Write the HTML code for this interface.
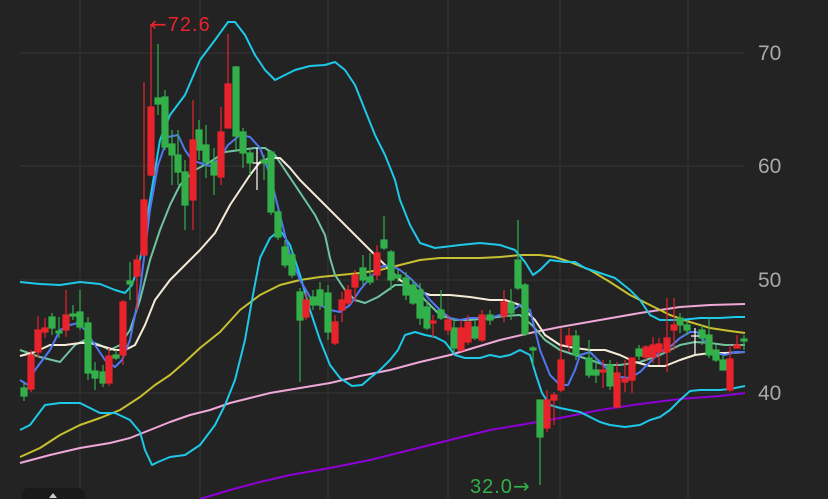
<!DOCTYPE html>
<html><head><meta charset="utf-8"><style>
html,body{margin:0;padding:0;background:#232323;overflow:hidden}
svg{display:block}
text{font-family:"Liberation Sans",sans-serif}
</style></head><body>
<svg width="828" height="499" viewBox="0 0 828 499" xmlns="http://www.w3.org/2000/svg">
<rect width="828" height="499" fill="#232323"/>
<g stroke="#343434" stroke-width="1">
<line x1="20" y1="53" x2="745" y2="53"/><line x1="20" y1="166" x2="745" y2="166"/>
<line x1="20" y1="280" x2="745" y2="280"/><line x1="20" y1="393" x2="745" y2="393"/>
<line x1="80" y1="0" x2="80" y2="499"/><line x1="200" y1="0" x2="200" y2="499"/>
<line x1="328" y1="0" x2="328" y2="499"/><line x1="448" y1="0" x2="448" y2="499"/>
<line x1="560" y1="0" x2="560" y2="499"/><line x1="688" y1="0" x2="688" y2="499"/>
</g>
<g fill="#a9a9a9" font-size="21">
<text x="758" y="60">70</text><text x="758" y="173">60</text><text x="758" y="287">50</text><text x="758" y="400">40</text><text x="758" y="514">30</text>
</g>
<g fill="none" stroke-width="2" stroke-linejoin="round">
<polyline stroke="#8e00d6" points="200,499 230,490 260,482 290,475 330,468 370,460 410,450 450,440 490,430 520,425 560,418 600,410 640,404 680,399 720,396 745,393"/>
<polyline stroke="#f0a8d8" points="20,463 50,455 80,448 110,443 130,438 150,430 170,422 190,415 210,410 230,403 250,398 270,393 300,388 330,383 360,376 390,370 420,362 450,355 480,346 500,340 530,333 560,327 600,320 640,313 680,307 710,305 745,304"/>
<polyline stroke="#c8c030" points="20,457 40,448 60,435 80,425 100,418 120,410 140,397 155,385 170,375 185,362 200,348 220,332 240,310 260,295 280,285 300,280 320,277 340,275 360,273 380,270 400,265 420,260 440,258 460,258 480,258 500,257 520,255 540,255 555,257 570,262 590,270 610,282 630,295 650,305 670,315 690,322 710,328 730,331 745,333"/>
<polyline stroke="#1ec8e8" points="20,282 40,284 60,285 80,282 100,284 115,290 125,293 132,285 140,260 150,200 160,140 170,115 185,95 200,60 215,40 228,22 235,22 245,35 255,55 265,70 275,80 285,75 295,70 310,66 325,65 335,62 345,70 355,85 365,110 375,135 385,155 395,180 400,200 410,225 420,243 435,248 460,245 480,243 500,245 515,250 525,262 533,275 540,270 550,260 565,262 575,262 585,268 600,273 615,278 630,290 640,300 650,315 660,320 680,320 700,318 720,318 735,317 745,317"/>
<polyline stroke="#1ec8e8" points="20,430 30,425 45,405 60,403 80,403 90,408 100,413 115,413 130,420 140,432 145,450 152,465 158,462 170,457 185,455 200,445 215,425 225,405 235,380 245,340 252,300 260,258 270,238 280,230 290,245 300,275 310,310 320,340 330,365 340,378 352,386 362,385 370,378 380,370 390,360 398,350 405,335 415,332 425,335 435,337 445,342 455,355 465,358 480,358 490,355 500,357 510,355 520,350 530,355 536,375 542,393 550,405 560,408 570,410 580,412 590,417 600,422 610,425 625,427 640,425 650,420 660,417 670,410 680,400 690,391 700,390 720,390 730,389 745,386"/>
<polyline stroke="#6fc3a0" points="20,350 40,357 60,362 75,345 85,340 100,345 110,350 120,345 130,330 140,300 150,260 160,230 170,205 180,185 195,170 210,162 225,152 240,150 255,148 265,148 275,155 285,170 295,185 305,200 315,215 325,235 330,258 335,275 345,290 355,300 365,303 378,297 388,290 395,285 405,285 415,288 425,300 440,315 455,320 470,320 490,318 505,316 520,315 532,325 545,340 560,350 575,355 590,360 605,365 620,365 640,362 660,355 680,345 695,342 710,343 725,345 745,345"/>
<polyline stroke="#f5ecd8" points="20,356 35,352 50,345 65,345 80,343 90,343 105,347 115,350 125,350 135,345 145,325 155,300 170,280 185,265 200,250 215,233 230,205 240,190 250,175 260,162 270,158 280,158 290,168 300,180 310,190 320,200 335,215 345,225 355,235 365,245 375,255 385,265 400,280 415,290 430,295 450,295 470,297 490,300 505,300 520,305 535,320 545,335 560,345 575,348 590,350 605,350 620,355 635,362 650,366 665,366 680,360 695,355 710,353 725,353 745,352"/>
<polyline stroke="#4f78f0" points="20,380 28,385 35,370 50,350 60,330 70,325 78,323 85,330 95,345 105,360 115,367 122,360 130,340 140,290 150,210 158,165 168,137 178,135 185,150 192,160 200,163 210,166 220,158 228,145 240,135 250,137 260,148 270,175 280,215 290,255 300,280 310,297 320,305 330,310 340,312 350,305 360,290 370,278 380,267 390,265 400,270 410,278 420,288 430,300 440,310 450,318 460,320 470,318 490,318 500,315 510,312 520,305 530,310 535,330 540,350 550,375 560,385 568,385 575,370 580,355 590,352 600,362 610,372 620,377 630,378 640,372 650,362 660,352 670,347 680,338 690,332 697,332 705,342 715,353 725,355 735,352 745,352"/>
</g>
<g stroke-width="1.2">
<g stroke="#33b04a" fill="#33b04a">
<line x1="24" y1="383" x2="24" y2="401"/><rect x="21" y="388" width="6" height="8"/>
<line x1="52" y1="313" x2="52" y2="335"/><rect x="49" y="317" width="6" height="11"/>
<line x1="59" y1="317" x2="59" y2="338"/><rect x="56" y="331" width="6" height="2"/>
<line x1="73" y1="305" x2="73" y2="320"/><rect x="70" y="314" width="6" height="2"/>
<line x1="80" y1="290" x2="80" y2="330"/><rect x="77" y="312" width="6" height="15"/>
<line x1="88" y1="317" x2="88" y2="380"/><rect x="85" y="323" width="6" height="50"/>
<line x1="95" y1="362" x2="95" y2="390"/><rect x="92" y="371" width="6" height="7"/>
<line x1="103" y1="365" x2="103" y2="387"/><rect x="100" y="372" width="6" height="11"/>
<line x1="116" y1="350" x2="116" y2="360"/><rect x="113" y="355" width="6" height="3"/>
<line x1="130" y1="262" x2="130" y2="300"/><rect x="127" y="281" width="6" height="3"/>
<line x1="158" y1="44" x2="158" y2="115"/><rect x="155" y="98" width="6" height="6"/>
<line x1="165" y1="90" x2="165" y2="150"/><rect x="162" y="97" width="6" height="50"/>
<line x1="172" y1="130" x2="172" y2="185"/><rect x="169" y="144" width="6" height="11"/>
<line x1="178" y1="130" x2="178" y2="185"/><rect x="175" y="155" width="6" height="17"/>
<line x1="185" y1="160" x2="185" y2="230"/><rect x="182" y="172" width="6" height="33"/>
<line x1="199" y1="120" x2="199" y2="160"/><rect x="196" y="130" width="6" height="20"/>
<line x1="206" y1="125" x2="206" y2="178"/><rect x="203" y="145" width="6" height="17"/>
<line x1="214" y1="148" x2="214" y2="195"/><rect x="211" y="162" width="6" height="13"/>
<line x1="236" y1="66" x2="236" y2="150"/><rect x="233" y="67" width="6" height="69"/>
<line x1="243" y1="128" x2="243" y2="168"/><rect x="240" y="132" width="6" height="21"/>
<line x1="250" y1="150" x2="250" y2="175"/><rect x="247" y="153" width="6" height="10"/>
<line x1="264" y1="155" x2="264" y2="180"/><rect x="261" y="160" width="6" height="3"/>
<line x1="271" y1="150" x2="271" y2="215"/><rect x="268" y="152" width="6" height="60"/>
<line x1="278" y1="210" x2="278" y2="240"/><rect x="275" y="212" width="6" height="25"/>
<line x1="285" y1="240" x2="285" y2="268"/><rect x="282" y="247" width="6" height="18"/>
<line x1="292" y1="250" x2="292" y2="278"/><rect x="289" y="255" width="6" height="20"/>
<line x1="300" y1="288" x2="300" y2="382"/><rect x="297" y="292" width="6" height="28"/>
<line x1="313" y1="290" x2="313" y2="310"/><rect x="310" y="297" width="6" height="8"/>
<line x1="320" y1="282" x2="320" y2="310"/><rect x="317" y="290" width="6" height="15"/>
<line x1="328" y1="285" x2="328" y2="340"/><rect x="325" y="293" width="6" height="39"/>
<line x1="363" y1="255" x2="363" y2="285"/><rect x="360" y="268" width="6" height="12"/>
<line x1="370" y1="253" x2="370" y2="285"/><rect x="367" y="277" width="6" height="5"/>
<line x1="384" y1="216" x2="384" y2="250"/><rect x="381" y="240" width="6" height="8"/>
<line x1="391" y1="250" x2="391" y2="290"/><rect x="388" y="252" width="6" height="28"/>
<line x1="398" y1="270" x2="398" y2="282"/><rect x="395" y="275" width="6" height="3"/>
<line x1="406" y1="272" x2="406" y2="300"/><rect x="403" y="278" width="6" height="17"/>
<line x1="413" y1="280" x2="413" y2="305"/><rect x="410" y="285" width="6" height="18"/>
<line x1="420" y1="283" x2="420" y2="325"/><rect x="417" y="290" width="6" height="28"/>
<line x1="427" y1="300" x2="427" y2="330"/><rect x="424" y="307" width="6" height="21"/>
<line x1="441" y1="290" x2="441" y2="320"/><rect x="438" y="310" width="6" height="8"/>
<line x1="454" y1="318" x2="454" y2="352"/><rect x="451" y="328" width="6" height="20"/>
<line x1="475" y1="320" x2="475" y2="340"/><rect x="472" y="327" width="6" height="11"/>
<line x1="490" y1="310" x2="490" y2="325"/><rect x="487" y="315" width="6" height="5"/>
<line x1="511" y1="289" x2="511" y2="320"/><rect x="508" y="303" width="6" height="10"/>
<line x1="518" y1="220" x2="518" y2="290"/><rect x="515" y="260" width="6" height="28"/>
<line x1="525" y1="283" x2="525" y2="336"/><rect x="522" y="285" width="6" height="49"/>
<line x1="533" y1="346" x2="533" y2="366"/><rect x="530" y="348" width="6" height="2"/>
<line x1="540" y1="400" x2="540" y2="485"/><rect x="537" y="400" width="6" height="37"/>
<line x1="576" y1="330" x2="576" y2="360"/><rect x="573" y="336" width="6" height="19"/>
<line x1="589" y1="340" x2="589" y2="378"/><rect x="586" y="358" width="6" height="17"/>
<line x1="596" y1="358" x2="596" y2="383"/><rect x="593" y="370" width="6" height="5"/>
<line x1="610" y1="360" x2="610" y2="390"/><rect x="607" y="365" width="6" height="21"/>
<line x1="639" y1="345" x2="639" y2="360"/><rect x="636" y="349" width="6" height="7"/>
<line x1="680" y1="313" x2="680" y2="333"/><rect x="677" y="318" width="6" height="7"/>
<line x1="687" y1="320" x2="687" y2="335"/><rect x="684" y="325" width="6" height="5"/>
<line x1="702" y1="325" x2="702" y2="345"/><rect x="699" y="330" width="6" height="8"/>
<line x1="709" y1="318" x2="709" y2="358"/><rect x="706" y="335" width="6" height="20"/>
<line x1="716" y1="345" x2="716" y2="362"/><rect x="713" y="350" width="6" height="10"/>
<line x1="723" y1="355" x2="723" y2="370"/><rect x="720" y="360" width="6" height="10"/>
<line x1="744" y1="335" x2="744" y2="350"/><rect x="741" y="339" width="6" height="2"/>
</g>
<g stroke="#e8232c" fill="#e8232c">
<line x1="31" y1="350" x2="31" y2="392"/><rect x="28" y="355" width="6" height="34"/>
<line x1="38" y1="316" x2="38" y2="358"/><rect x="35" y="330" width="6" height="22"/>
<line x1="45" y1="318" x2="45" y2="338"/><rect x="42" y="328" width="6" height="4"/>
<line x1="66" y1="290" x2="66" y2="337"/><rect x="63" y="315" width="6" height="15"/>
<line x1="109" y1="348" x2="109" y2="386"/><rect x="106" y="356" width="6" height="27"/>
<line x1="123" y1="300" x2="123" y2="365"/><rect x="120" y="302" width="6" height="53"/>
<line x1="137" y1="255" x2="137" y2="310"/><rect x="134" y="260" width="6" height="16"/>
<line x1="144" y1="82" x2="144" y2="255"/><rect x="141" y="200" width="6" height="55"/>
<line x1="151" y1="24" x2="151" y2="176"/><rect x="148" y="107" width="6" height="68"/>
<line x1="193" y1="100" x2="193" y2="230"/><rect x="190" y="140" width="6" height="60"/>
<line x1="221" y1="107" x2="221" y2="185"/><rect x="218" y="132" width="6" height="45"/>
<line x1="228" y1="34" x2="228" y2="128"/><rect x="225" y="84" width="6" height="44"/>
<line x1="306" y1="292" x2="306" y2="320"/><rect x="303" y="300" width="6" height="17"/>
<line x1="335" y1="315" x2="335" y2="345"/><rect x="332" y="322" width="6" height="21"/>
<line x1="342" y1="292" x2="342" y2="322"/><rect x="339" y="300" width="6" height="10"/>
<line x1="348" y1="285" x2="348" y2="305"/><rect x="345" y="290" width="6" height="13"/>
<line x1="355" y1="270" x2="355" y2="302"/><rect x="352" y="275" width="6" height="12"/>
<line x1="377" y1="245" x2="377" y2="280"/><rect x="374" y="253" width="6" height="22"/>
<line x1="433" y1="315" x2="433" y2="337"/><rect x="430" y="321" width="6" height="2"/>
<line x1="448" y1="315" x2="448" y2="335"/><rect x="445" y="320" width="6" height="10"/>
<line x1="461" y1="320" x2="461" y2="352"/><rect x="458" y="328" width="6" height="22"/>
<line x1="468" y1="315" x2="468" y2="345"/><rect x="465" y="322" width="6" height="20"/>
<line x1="482" y1="310" x2="482" y2="342"/><rect x="479" y="315" width="6" height="25"/>
<line x1="504" y1="290" x2="504" y2="322"/><rect x="501" y="302" width="6" height="14"/>
<line x1="547" y1="390" x2="547" y2="432"/><rect x="544" y="400" width="6" height="28"/>
<line x1="554" y1="392" x2="554" y2="425"/><rect x="551" y="395" width="6" height="5"/>
<line x1="561" y1="328" x2="561" y2="392"/><rect x="558" y="360" width="6" height="30"/>
<line x1="569" y1="328" x2="569" y2="352"/><rect x="566" y="336" width="6" height="9"/>
<line x1="603" y1="360" x2="603" y2="388"/><rect x="600" y="370" width="6" height="2"/>
<line x1="617" y1="362" x2="617" y2="408"/><rect x="614" y="373" width="6" height="34"/>
<line x1="625" y1="360" x2="625" y2="392"/><rect x="622" y="379" width="6" height="3"/>
<line x1="632" y1="358" x2="632" y2="393"/><rect x="629" y="358" width="6" height="22"/>
<line x1="646" y1="345" x2="646" y2="360"/><rect x="643" y="347" width="6" height="10"/>
<line x1="653" y1="337" x2="653" y2="363"/><rect x="650" y="345" width="6" height="12"/>
<line x1="659" y1="338" x2="659" y2="365"/><rect x="656" y="344" width="6" height="8"/>
<line x1="667" y1="298" x2="667" y2="372"/><rect x="664" y="338" width="6" height="14"/>
<line x1="674" y1="298" x2="674" y2="350"/><rect x="671" y="325" width="6" height="5"/>
<line x1="730" y1="345" x2="730" y2="392"/><rect x="727" y="359" width="6" height="31"/>
<line x1="737" y1="335" x2="737" y2="348"/><rect x="734" y="345" width="6" height="3"/>
</g>
<g stroke="#ffffff">
<line x1="257" y1="148" x2="257" y2="190"/><line x1="253" y1="163" x2="261" y2="163"/>
<line x1="695" y1="328" x2="695" y2="354"/><line x1="691" y1="336" x2="699" y2="336"/>
</g>
</g>
<text x="150" y="31" fill="#e8232c" font-size="20" letter-spacing="1"><tspan font-family="DejaVu Sans">←</tspan>72.6</text>
<text x="470" y="493" fill="#33b04a" font-size="20" letter-spacing="1">32.0<tspan font-family="DejaVu Sans">→</tspan></text>
<rect x="22" y="488" width="63" height="20" rx="7" fill="#1a1a1a"/>
<path d="M49 498 L53 493 L57 498 Z" fill="#cccccc"/>
</svg>
</body></html>
